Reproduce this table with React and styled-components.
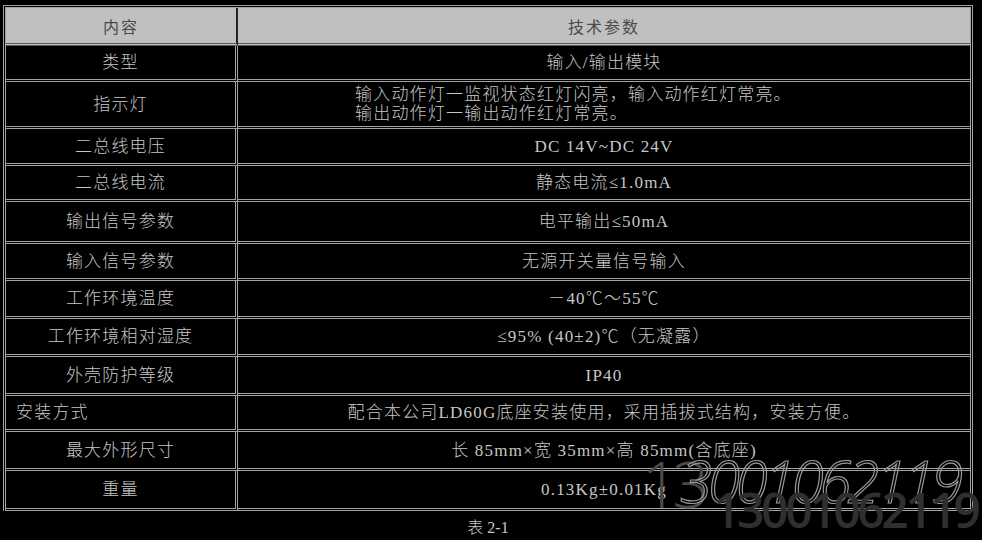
import React from "react";
import styled, { createGlobalStyle } from "styled-components";

const Global = createGlobalStyle`
  html, body { margin: 0; padding: 0; background: #000; }
  body { width: 982px; height: 540px; overflow: hidden; }
`;

const Page = styled.div`
  position: relative;
  width: 982px;
  height: 540px;
  background: #000;
  padding: 5px 0 0 3px;
  box-sizing: border-box;
`;

const Table = styled.table`
  width: 970px;
  border-collapse: separate;
  border-spacing: 0;
  border: 3px double #a4a4a4;
  border-bottom: none;
  table-layout: fixed;
`;

const HeadCell = styled.th`
  height: 35px;
  padding: 0;
  background: #c0c0c0;
  color: #4a4a4a;
  font-family: "Noto Sans CJK SC", sans-serif;
  font-weight: 400;
  font-size: 16px;
  letter-spacing: 2px;
  text-align: center;
  border-bottom: 3px double #5a5a5a;
  border-right: ${(p) => (p.$last ? "none" : "2px solid #222")};
`;

const Row = styled.tr`
  height: ${(p) => p.$h}px;
`;

const Cell = styled.td`
  padding: 0 0 0 ${(p) => p.$pad || 0}px;
  text-align: ${(p) => p.$align || "center"};
  vertical-align: middle;
  border-bottom: 3px double #a4a4a4;
  border-right: ${(p) => (p.$last ? "none" : "3px double #a4a4a4")};
  font-family: "Liberation Serif", "Noto Sans CJK SC", serif;
  font-weight: 300;
  font-size: 17px;
  line-height: 19px;
  letter-spacing: 1.2px;
  color: #c6c6c6;
  white-space: nowrap;
`;

const Caption = styled.div`
  width: 970px;
  text-align: center;
  margin-top: 3px;
  font-family: "Liberation Serif", "Noto Sans CJK SC", serif;
  font-weight: 300;
  font-size: 16px;
  color: #c6c6c6;
`;

const Watermark = styled.div`
  position: absolute;
  left: 0;
  top: 0;
  width: 982px;
  height: 540px;
  pointer-events: none;
`;

const ThinMark = styled.span`
  position: absolute;
  left: ${(p) => p.$x}px;
  top: ${(p) => p.$y}px;
  font-family: "Open Sans", "DejaVu Sans", sans-serif;
  font-style: ${(p) => (p.$italic ? "italic" : "normal")};
  font-weight: 300;
  font-size: ${(p) => p.$size}px;
  line-height: 1;
  letter-spacing: ${(p) => p.$ls}px;
  color: ${(p) => p.$fill};
  -webkit-text-stroke: ${(p) => (p.$stroke ? `1.2px ${p.$stroke}` : "0")};
  white-space: nowrap;
`;

const BoldMark = styled.span`
  position: absolute;
  left: 713px;
  top: 486px;
  font-family: "Open Sans", "DejaVu Sans", sans-serif;
  font-weight: 600;
  font-size: 48px;
  line-height: 1;
  letter-spacing: -3.4px;
  color: #2f2f2f;
  white-space: nowrap;
`;

const rows = [
  { k: "类型", v: "输入/输出模块", h: 36 },
  {
    k: "指示灯",
    v: (
      <>
        输入动作灯一监视状态红灯闪亮，输入动作红灯常亮。
        <br />
        输出动作灯一输出动作红灯常亮。
      </>
    ),
    h: 47,
    align: "left",
    pad: 117,
  },
  { k: "二总线电压", v: "DC 14V~DC 24V", h: 37 },
  { k: "二总线电流", v: "静态电流≤1.0mA", h: 36 },
  { k: "输出信号参数", v: "电平输出≤50mA", h: 42 },
  { k: "输入信号参数", v: "无源开关量信号输入", h: 37 },
  { k: "工作环境温度", v: "－40℃～55℃", h: 38 },
  { k: "工作环境相对湿度", v: "≤95% (40±2)℃（无凝露）", h: 38 },
  { k: "外壳防护等级", v: "IP40", h: 39 },
  {
    k: "安装方式",
    kAlign: "left",
    kPad: 10,
    v: "配合本公司LD60G底座安装使用，采用插拔式结构，安装方便。",
    h: 36,
  },
  { k: "最大外形尺寸", v: "长 85mm×宽 35mm×高 85mm(含底座)", h: 39 },
  { k: "重量", v: "0.13Kg±0.01Kg", h: 40 },
];

export default function App() {
  return (
    <Page>
      <Global />
      <Table>
        <colgroup>
          <col style={{ width: "232px" }} />
          <col />
        </colgroup>
        <thead>
          <tr>
            <HeadCell>内容</HeadCell>
            <HeadCell $last>技术参数</HeadCell>
          </tr>
        </thead>
        <tbody>
          {rows.map((r, i) => (
            <Row key={i} $h={r.h}>
              <Cell $align={r.kAlign} $pad={r.kPad}>
                {r.k}
              </Cell>
              <Cell $last $align={r.align} $pad={r.pad}>
                {r.v}
              </Cell>
            </Row>
          ))}
        </tbody>
      </Table>
      <Caption>表 2-1</Caption>
      <Watermark>
        <ThinMark $x={642} $y={452} $size={64} $ls={-6} $fill="#4a4a4a">
          13
        </ThinMark>
        <ThinMark
          $x={680}
          $y={452}
          $size={58}
          $ls={-4}
          $italic
          $fill="transparent"
          $stroke="#9a9a9a"
        >
          3001062119
        </ThinMark>
        <BoldMark>13001062119</BoldMark>
      </Watermark>
    </Page>
  );
}
